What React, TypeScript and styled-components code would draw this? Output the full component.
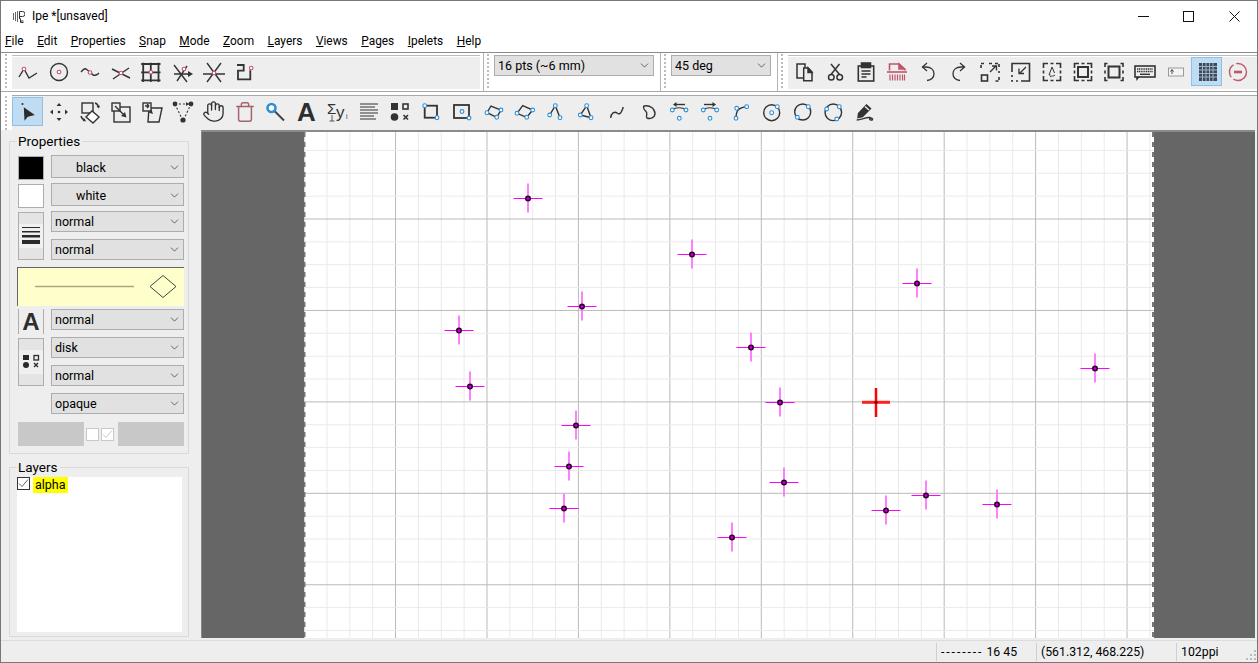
import React from 'react';
import styled, { createGlobalStyle } from 'styled-components';
import { ChevronDown, Hand, Trash } from 'lucide-react';

const GlobalStyle = createGlobalStyle`
  html, body {
    margin: 0;
    padding: 0;
    overflow: hidden;
    background: #fff;
  }
`;

const Window = styled.div`
  position: relative;
  width: 1258px;
  height: 663px;
  display: flex;
  flex-direction: column;
  background: #fff;
  color: #000;
  font-family: Roboto, "Noto Sans CJK KR", sans-serif;
  font-size: 12px;
  outline: 1px solid #777;
  outline-offset: -1px;
`;

const TitleBar = styled.div`
  height: 32px;
  display: flex;
  align-items: center;
  padding-left: 13px;
  flex-shrink: 0;
`;

const TitleText = styled.span`
  margin-left: 7px;
  flex: 1;
`;

const WinButton = styled.div`
  width: 45.5px;
  height: 32px;
  display: flex;
  align-items: center;
  justify-content: center;
`;

const WinButtons = styled.div`
  display: flex;
  padding-right: 1px;
`;

const MenuBar = styled.div`
  height: 18px;
  display: flex;
  align-items: center;
  padding-left: 5px;
  gap: 13.5px;
  font-size: 11.9px;
  flex-shrink: 0;
`;

const MenuItem = styled.span`
  white-space: nowrap;
`;

const TopRow = styled.div`
  height: 40px;
  box-sizing: border-box;
  display: flex;
  border-top: 1px solid #8c8c8c;
  border-bottom: 1px solid #a8a8a8;
  flex-shrink: 0;
  margin-top: 2px;
  margin-bottom: -2px;
`;

const Section = styled.div<{ $width: number; $last?: boolean }>`
  width: ${p => p.$width}px;
  ${p => (p.$last ? 'flex: 1;' : 'border-right: 1px solid #b4b4b4;')}
  box-sizing: border-box;
  display: flex;
  flex-shrink: 0;
`;

const Handle = styled.div<{ $width: number }>`
  width: ${p => p.$width}px;
  flex-shrink: 0;
  &::before {
    content: '';
    display: block;
    margin: 1px 0 1px ${p => (p.$width > 10 ? 5 : 3)}px;
    width: 2px;
    height: 34px;
    background: repeating-linear-gradient(to bottom, #bbb 0 2px, transparent 2px 4px);
  }
`;

const Panel = styled.div<{ $width?: number }>`
  ${p => (p.$width ? `width: ${p.$width}px;` : 'flex: 1;')}
  box-sizing: border-box;
  margin-top: 2px;
  border-top: 1px solid #bdbdbd;
  padding-top: 1px;
  padding-bottom: 2px;
  background: #eee;
  background-clip: content-box;
  display: flex;
  align-items: flex-start;
`;

const ComboHolder = styled.div`
  padding-top: 2px;
`;

const SecondRow = styled.div`
  height: 38px;
  box-sizing: border-box;
  display: flex;
  flex-shrink: 0;
  padding-top: 3px;
  margin-top: 2px;
  margin-bottom: -2px;
`;

const SecondPanel = styled.div`
  flex: 1;
  border-top: 1px solid #a8a8a8;
  background: #eee;
  background-clip: padding-box;
  display: flex;
  align-items: flex-start;
  padding-top: 1px;
`;

const ToolButton = styled.div<{ $on?: boolean }>`
  width: 31px;
  height: 29px;
  box-sizing: border-box;
  flex-shrink: 0;
  display: flex;
  align-items: center;
  justify-content: center;
  border: 1px solid ${p => (p.$on ? '#8cc0e8' : 'transparent')};
  background: ${p => (p.$on ? '#c0dcf3' : 'transparent')};
`;

const BigA = styled.span<{ $size: number }>`
  font-family: "Liberation Sans", sans-serif;
  font-weight: 700;
  font-size: ${p => p.$size}px;
  line-height: 1;
  color: #2e2e2e;
`;

const Main = styled.div`
  height: 510px;
  display: flex;
  flex-shrink: 0;
  margin-top: 2px;
  background: #eee;
`;

const SidePanel = styled.div`
  width: 201px;
  box-sizing: border-box;
  flex-shrink: 0;
  padding: 11px 0 0 9px;
  background: #eee;
`;

const GroupBox = styled.div<{ $gap?: number }>`
  position: relative;
  width: 180px;
  box-sizing: border-box;
  margin-top: ${p => p.$gap ?? 0}px;
  border: 1px solid #d9d9d9;
`;

const Legend = styled.span`
  position: absolute;
  top: -9px;
  left: 7px;
  padding: 0 2px 0 1px;
  background: #eee;
  font-size: 13.5px;
  line-height: 16px;
`;

const PropsGrid = styled.div`
  display: grid;
  grid-template-columns: 26px 133px;
  grid-template-rows: repeat(4, 28px) 42px repeat(4, 28px) 25px;
  column-gap: 7px;
  padding: 13px 0 7px 8px;
`;

const Swatch = styled.div<{ $color: string }>`
  width: 26px;
  height: 24px;
  margin-top: 1px;
  box-sizing: border-box;
  border: 1px solid #adadad;
  background: ${p => p.$color};
  box-shadow: inset 0 0 0 1px ${p => (p.$color === '#000' ? '#000' : '#fff')};
`;

const IconTile = styled.div`
  grid-row: span 2;
  width: 26px;
  height: 48px;
  margin-top: 1px;
  box-sizing: border-box;
  border: 1px solid #adadad;
  background: linear-gradient(to bottom, #e4e4e4 0 11px, #f0f0f0 11px 35px, #e4e4e4 35px);
  display: flex;
  align-items: center;
  justify-content: center;
`;

const ATile = styled.div`
  width: 26px;
  height: 25px;
  box-sizing: border-box;
  border-left: 1px solid #adadad;
  border-right: 1px solid #adadad;
  display: flex;
  align-items: center;
  justify-content: center;
`;

const Combo = styled.div<{ $width: number; $tall?: boolean; $center?: boolean }>`
  width: ${p => p.$width}px;
  height: ${p => (p.$tall ? 23 : 21)}px;
  box-sizing: border-box;
  display: flex;
  align-items: center;
  justify-content: space-between;
  padding: ${p => (p.$tall ? '1px' : '0')} 2px 0 ${p => (p.$center ? 24 : 3)}px;
  border: 1px solid #adadad;
  background: #e1e1e1;
  font-size: 12.5px;
  white-space: nowrap;
`;

const Preview = styled.div`
  grid-column: span 2;
  margin-left: -1px;
  width: 167px;
  height: 39px;
  box-sizing: border-box;
  border-top: 1px solid #646464;
  border-left: 1px solid #646464;
  background: #ffffcc;
`;

const BottomRow = styled.div`
  grid-column: span 2;
  margin-top: 1px;
  display: flex;
  align-items: center;
`;

const GrayBlock = styled.div`
  width: 66px;
  height: 24px;
  background: #c8c8c8;
`;

const MiniCheck = styled.div<{ $ticked?: boolean }>`
  width: 13px;
  height: 13px;
  box-sizing: border-box;
  border: 1px solid #c8c8c8;
  background: #fff;
  margin-left: 2px;
  display: flex;
  ${p => (p.$ticked ? 'margin-right: 4px;' : '')}
`;

const LayersBody = styled.div`
  padding: 9px 6px 4px 7px;
`;

const LayerList = styled.div`
  height: 155px;
  background: #fff;
  display: flex;
  align-items: flex-start;
`;

const LayerCheck = styled.div`
  width: 13px;
  height: 13px;
  box-sizing: border-box;
  border: 1px solid #333;
  background: #fff;
  display: flex;
`;

const LayerName = styled.span`
  margin-left: 3px;
  padding: 0 2px;
  height: 16px;
  line-height: 15px;
  background: #ffff00;
  font-size: 12.5px;
`;

const Canvas = styled.div`
  flex: 1;
  margin-bottom: 2px;
  margin-right: 3px;
  box-sizing: border-box;
  border-left: 1px solid #888;
  border-top: 2px solid #8a8a8a;
  background: #666;
  padding-left: 102px;
  display: flex;
`;

const PageSheet = styled.svg`
  display: block;
  background: #fff;
`;

const StatusBar = styled.div`
  height: 23px;
  box-sizing: border-box;
  border-top: 1px solid #dcdcdc;
  background: #eee;
  display: flex;
  flex-shrink: 0;
  padding: 2px 0 2px 936px;
  font-size: 12.3px;
`;

const StatusCell = styled.div<{ $width?: number }>`
  ${p => (p.$width ? `width: ${p.$width}px;` : 'flex: 1;')}
  box-sizing: border-box;
  border-left: 1px solid #cfcfcf;
  padding-left: 4px;
  line-height: 19px;
  white-space: nowrap;
  position: relative;
`;

const SnapDashes = styled.span`
  letter-spacing: 1.9px;
`;

const Grip = styled.svg`
  position: absolute;
  right: 1px;
  bottom: 0;
`;

// icons are drawn on a 24x24 box, stroke colours taken from the ipe toolbar
const DARK = '#333';
const BLUE = '#2f8fd6';
const ROSE = '#c0566a';

const Ico: React.FC<{ children: React.ReactNode; stroke?: string; sw?: number }> = ({ children, stroke = DARK, sw = 1.4 }) => (
  <svg width={24} height={24} viewBox="0 0 24 24" fill="none" stroke={stroke} strokeWidth={sw}>
    {children}
  </svg>
);

const Cp: React.FC<{ x: number; y: number }> = ({ x, y }) => (
  <circle cx={x} cy={y} r={1.9} fill="#fff" stroke={BLUE} strokeWidth={1.1} />
);

const Sn: React.FC<{ x: number; y: number }> = ({ x, y }) => (
  <circle cx={x} cy={y} r={1.8} fill="#fff" stroke={ROSE} strokeWidth={1.1} />
);

const Dot: React.FC<{ x: number; y: number; r?: number }> = ({ x, y, r = 2 }) => (
  <circle cx={x} cy={y} r={r} fill={DARK} stroke="none" />
);

const snapIcons: React.ReactNode[] = [
  <Ico><path d="M3 17L8 9l5 9 8-5" /><Sn x={8} y={9} /></Ico>,
  <Ico><circle cx={12} cy={12} r={8.5} /><Sn x={12} y={12} /></Ico>,
  <Ico><path d="M3 12c2-2 3-4 5-3l4 3c3 3 3 4 6 3 1-.3 2-1 3-2" /><Sn x={12} y={12.5} /></Ico>,
  <Ico><path d="M3 9l18 9M4 19L20 8" /><Sn x={12} y={13} /></Ico>,
  <Ico sw={1.8}>
    <path d="M3.2 2.700V22M10.800 2.700V22M18.500 2.700V22M1.200 4h19.300M1.200 12.300h19.300M1.200 20.300h19.300" />
    <Sn x={10.800} y={12.300} />
  </Ico>,
  <Ico>
    <path d="M3 5l13 17M16 6L6 21M3 14h15" />
    <path d="M17 11l5 3-5 3z" fill={DARK} stroke="none" />
    <Sn x={13} y={9} />
  </Ico>,
  <Ico><path d="M5 3l14 19M19 3L5 22M1 14h22" /><Sn x={12} y={13} /></Ico>,
  <Ico sw={1.8}>
    <path d="M4 5h6.700v5.700H5v8.600h12.300v-9" />
    <Sn x={18.200} y={8} />
  </Ico>,
];

const toolIcons: React.ReactNode[] = [
  <svg width={24} height={24} viewBox="0 0 24 24">
    <circle cx={6.500} cy={4} r={1.100} fill={DARK} />
    <path d="M7.800 7.300l11 7.700-7 1.700-3.300 4z" fill="#2b2b2b" />
  </svg>,
  <Ico>
    <circle cx={12} cy={12} r={1.300} fill={DARK} stroke="none" />
    <path d="M12 3l-2.500 3h5zM12 21l-2.500-3h5zM3 12l3-2.500v5zM21 12l-3-2.500v5z" fill={DARK} stroke="none" />
  </Ico>,
  <Ico>
    <rect x={4} y={3} width={11} height={10} />
    <path d="M8 17l6-6 7 6-6 6z" fill="#fff" />
    <path d="M17 3c2 .5 3 2 3.500 4M3 16c.5 2 2 3.500 4 4" />
    <path d="M21 8.500l-2.500-2 3.500-1zM8 21.500l-3.500-.5 2-2.500z" fill={DARK} stroke="none" />
  </Ico>,
  <Ico>
    <rect x={5} y={7} width={16} height={15} />
    <rect x={3} y={3} width={8} height={8} fill="#eee" />
    <path d="M6 6l10 10" />
    <path d="M17.500 17.500l-5.500-1.500 4-4z" fill={DARK} stroke="none" />
  </Ico>,
  <Ico>
    <path d="M9 8h13l-3 14H8z" fill="#eee" />
    <rect x={3} y={3} width={8} height={8} fill="#eee" />
    <path d="M5 6h4M9 6l-2-2M9 6l-2 2" />
    <path d="M13 14l-4.500-1.500 3-3z" fill={DARK} stroke="none" />
  </Ico>,
  <Ico sw={1.100}>
    <path d="M4 4l8 17 8-17M4 4h14" strokeDasharray="2 2" />
    <Dot x={4} y={4} r={2.400} />
    <Dot x={20} y={4} r={2.400} />
    <Dot x={12} y={20} r={2.600} />
    <path d="M15 2l3 2-3 2z" fill={DARK} stroke="none" />
  </Ico>,
  <Hand size={23} color={DARK} strokeWidth={1.400} />,
  <Trash size={22} color="#a5646c" strokeWidth={1.600} />,
  <Ico sw={2}>
    <circle cx={7.500} cy={8} r={4} stroke={BLUE} strokeWidth={2.600} fill="#fff" />
    <path d="M11 11.500l9 9" stroke="#444" />
  </Ico>,
  <BigA $size={26}>A</BigA>,
  <svg width={24} height={24} viewBox="0 0 24 24" fill={DARK} fontFamily='"Liberation Sans", sans-serif'>
    <text x={1} y={14} fontSize={15}>Σ</text>
    <text x={10} y={18} fontSize={17}>y</text>
    <text x={20} y={19} fontSize={7}>i</text>
    <path d="M6 15v6M3.500 21h5" stroke={DARK} strokeWidth={0.800} fill="none" />
  </svg>,
  <Ico sw={1.200}>
    <path d="M3 4h18M3 7h15M3 10h18M3 13h18M3 16h14M3 19h16" />
  </Ico>,
  <Ico>
    <rect x={3} y={3} width={7} height={7} fill={DARK} stroke="none" />
    <rect x={15} y={4} width={5} height={5} strokeWidth={1.600} />
    <circle cx={6.500} cy={17} r={3.800} fill={DARK} stroke="none" />
    <path d="M15.500 15l4.500 4.500M20 15l-4.500 4.500" strokeWidth={1.600} />
  </Ico>,
  <Ico sw={1.800}><rect x={5.700} y={5.700} width={12.300} height={12} /><Cp x={5.700} y={5.700} /><Cp x={18} y={17.700} /></Ico>,
  <Ico sw={1.800}><rect x={4} y={5} width={15} height={13} /><Cp x={12} y={11.500} /><Cp x={19} y={18} /></Ico>,
  <Ico><path d="M6 12.700L10 6l10 4-4.300 7.300z" /><Cp x={6} y={12.700} /><Cp x={20} y={10} /><Cp x={15.700} y={17.300} /></Ico>,
  <Ico><path d="M5 13.300L10.700 5.700 20.700 10l-6 7.300z" /><Cp x={5} y={13.300} /><Cp x={20.700} y={10} /><Cp x={14.700} y={17.300} /></Ico>,
  <Ico><path d="M6.700 15l5.600-9.300L17 17.700" /><Cp x={6.700} y={15} /><Cp x={12.300} y={5.700} /><Cp x={17} y={17.700} /></Ico>,
  <Ico><path d="M6.300 15l6.400-9.300L17 17.700z" /><Cp x={6.300} y={15} /><Cp x={12.700} y={5.700} /><Cp x={17} y={17.700} /></Ico>,
  <Ico><path d="M5.700 18c.3-5 4-7 6.300-5s4 1 6.300-6" /></Ico>,
  <Ico><path d="M8 6c6-1.500 11 3 11 7.500 0 4-5 6-8 4.500-2-1.500 1.500-4-1-6.500C8.500 10 6.500 8 8 6z" /></Ico>,
  <Ico sw={1.200}>
    <path d="M5.300 10c3-3 10-3 13.700 0" />
    <path d="M8 4.500h10" strokeWidth={1.400} />
    <path d="M6 4.500l3.500-2.500v5z" fill={DARK} stroke="none" />
    <Cp x={5.300} y={10} /><Cp x={19} y={10} /><Cp x={12.300} y={18.300} />
  </Ico>,
  <Ico sw={1.200}>
    <path d="M5.300 10c3-3 10-3 13.400 0" />
    <path d="M6 4.500h10" strokeWidth={1.400} />
    <path d="M18 4.500l-3.500-2.500v5z" fill={DARK} stroke="none" />
    <Cp x={5.300} y={10} /><Cp x={18.700} y={10} /><Cp x={12} y={18.300} />
  </Ico>,
  <Ico><path d="M7 18.300c0-7 2-11 10.700-11.600" /><Cp x={7} y={18.300} /><Cp x={7.700} y={8.300} /><Cp x={17.700} y={6.700} /></Ico>,
  <Ico><circle cx={11.700} cy={12.700} r={8} /><Cp x={11.700} y={12.700} /><Cp x={17.300} y={6.700} /></Ico>,
  <Ico><circle cx={11.700} cy={12} r={8} /><Cp x={17.300} y={6.700} /><Cp x={6.300} y={17.300} /></Ico>,
  <Ico><circle cx={11.300} cy={12.300} r={8.300} /><Cp x={4.700} y={9} /><Cp x={17.300} y={6.700} /><Cp x={14.700} y={19} /></Ico>,
  <Ico>
    <path d="M5.500 13.500L13.500 5l4 3.500-8 8-4.500 1z" fill={DARK} />
    <path d="M12 6.500l4 3.500" stroke="#eee" />
    <path d="M3.700 20c5 0 9-3 13-2.500 3 .5 4 2.500 1.500 2.500-1.500 0-2-1-1-2" />
  </Ico>,
];

const fileIcons: React.ReactNode[] = [
  <Ico sw={1.500}>
    <rect x={5} y={4} width={8} height={14} />
    <path d="M11.700 8h4.500l3.800 4v8.700h-8.300z" fill="#eee" />
    <path d="M16 8v4.500h4z" fill={DARK} />
  </Ico>,
  <Ico sw={1.500}>
    <path d="M8 4l8.500 10.500M16.500 4L8 14.500" />
    <circle cx={8.300} cy={17.300} r={2.800} />
    <circle cx={16.700} cy={17.300} r={2.800} />
  </Ico>,
  <Ico sw={1.600}>
    <rect x={4.300} y={6} width={15.400} height={15} />
    <rect x={7.500} y={3} width={9} height={4.500} fill={DARK} />
    <path d="M7.500 11h9M7.500 14h9M7.500 17h5" />
  </Ico>,
  <Ico stroke={ROSE} sw={1.600}>
    <path d="M4.500 10.500V4H14l5.500 5v1.500" />
    <path d="M14 4v5h5.500z" fill={ROSE} />
    <path d="M2 12h20" />
    <path d="M5 14.500v6M7.500 14.500v6M10 14.500v6M12.500 14.500v6M15 14.500v6M17.500 14.500v6M19.500 14.500v6" strokeWidth={1.200} />
  </Ico>,
  <Ico sw={1.300}>
    <path d="M11 3L6.500 7 11 11" />
    <path d="M6.500 7H10c5 0 8 3 8 7 0 3.500-3 6.500-7 6.500" />
  </Ico>,
  <Ico sw={1.300}>
    <path d="M13 3l4.500 4L13 11" />
    <path d="M17.500 7H14c-5 0-8 3-8 7 0 3.500 3 6.500 7 6.500" />
  </Ico>,
  <Ico sw={1.600}>
    <path d="M3 8V3.500h4.500M11 3.500h3M17 3.500h4V8M21 11v2M21 17v4h-4" strokeDasharray="3 1.500" />
    <rect x={3.500} y={15} width={6} height={6} />
    <path d="M12 12l6-6M14 6h4.500v4.500" strokeWidth={1.300} />
  </Ico>,
  <Ico sw={1.600}>
    <path d="M3 12V3.500h17.500V21H12" />
    <path d="M3 15v2M3 20v1h1.500M7 21h2" strokeDasharray="2 1.500" />
    <path d="M17 7l-6 6M10 8.500V13.500h5" strokeWidth={1.300} />
  </Ico>,
  <Ico sw={1.600}>
    <path d="M3.500 8V3.500H8M16 3.500h4.500V8M3.500 16v4.500H8M16 20.500h4.500V16M10.500 3.500h3M10.500 20.500h3M3.500 10.500v3M20.500 10.500v3" />
    <path d="M12 7l-3 8h1.500M12 7l2.500 6M10 17c2-2 3 0 5-2" strokeWidth={1} />
  </Ico>,
  <Ico sw={1.600}>
    <path d="M3.500 8V3.500H8M16 3.500h4.500V8M3.500 16v4.500H8M16 20.500h4.500V16M10.500 3.500h3M10.500 20.500h3M3.500 10.500v3M20.500 10.500v3" />
    <rect x={7} y={7} width={10} height={10} strokeWidth={2} />
  </Ico>,
  <Ico sw={1.600}>
    <path d="M3 7V3.500h2.500M18.500 3.500H21V7M3 17v3.500h2.500M18.500 20.500H21V17M3 10.500v3M21 10.500v3" />
    <rect x={6.500} y={6.500} width={11} height={11} strokeWidth={2} />
  </Ico>,
  <Ico sw={1.400}>
    <rect x={2} y={6} width={20} height={11} fill="#eee" strokeWidth={1.600} />
    <path d="M4 9h16M4 11.500h16" strokeDasharray="1.200 .6" />
    <path d="M7 14.300h10" />
    <path d="M3 17l.5 4 3-4z" fill={DARK} stroke="none" />
  </Ico>,
  <Ico stroke="#9a9a9a" sw={1}>
    <rect x={4.500} y={8} width={15} height={8} fill="#f4f4f4" />
    <path d="M8 14v-4M6.500 11.500L8 9.500l1.500 2" stroke="#444" />
  </Ico>,
  <svg width={24} height={24} viewBox="0 0 24 24">
    <rect x={4} y={3} width={18} height={18} fill="#3a4a5a" />
    <path d="M7.500 3v18M11 3v18M14.500 3v18M18 3v18M4 6.500h18M4 10h18M4 13.500h18M4 17h18" stroke="#9fb4c8" strokeWidth={1} />
  </svg>,
  <Ico stroke={ROSE} sw={1.400}>
    <circle cx={12} cy={12} r={8.500} strokeDasharray="18 3 14 3" />
    <path d="M8 12h8" strokeWidth={2.600} />
  </Ico>,
];

const IpeLogo: React.FC = () => (
  <svg width={12} height={15} viewBox="0 0 12 15" fill="none" stroke="#333" strokeWidth={1}>
    <path d="M.5 4v7M2.500 3v9M4.500 2v11" stroke="#666" />
    <path d="M6.500 10V2.500h3a2.500 2.500 0 0 1 0 5h-3" />
    <path d="M7.500 12h3M7.500 9.500v4h3" />
  </svg>
);

const menus: [string, string][] = [
  ['F', 'ile'], ['E', 'dit'], ['P', 'roperties'], ['S', 'nap'], ['M', 'ode'], ['Z', 'oom'],
  ['L', 'ayers'], ['V', 'iews'], ['P', 'ages'], ['I', 'pelets'], ['H', 'elp'],
];

const SelectBox: React.FC<{ label: string; width?: number; tall?: boolean; center?: boolean }> = ({ label, width = 133, tall, center }) => (
  <Combo $width={width} $tall={tall} $center={center}>
    <span>{label}</span>
    <ChevronDown size={13} strokeWidth={1.300} color="#333" />
  </Combo>
);

// page coordinates of the drawing, the sheet starts at 304,132 on screen
const SHEET_X = 304;
const SHEET_Y = 132;
const STEP = 91.44;

const marks: [number, number][] = [
  [528, 198], [692, 254], [917, 283], [582, 306], [459, 330], [751, 347], [1095, 368], [470, 386],
  [780, 402], [576, 425], [569, 466], [784, 482], [926, 495], [564, 508], [886, 510], [997, 504], [732, 537],
];

const minorX = Array.from({ length: 38 }, (_, i) => 0.1 + (i * STEP) / 4);
const minorY = Array.from({ length: 23 }, (_, i) => 219 - STEP + (i * STEP) / 4 - SHEET_Y);

const Page: React.FC = () => (
  <PageSheet width={850} height={506} viewBox="0 0 850 506">
    {minorX.map((x, i) => (
      <line key={`x${i}`} x1={x} x2={x} y1={0} y2={506} stroke={i % 4 ? '#eaeaea' : '#bababa'} />
    ))}
    {minorY.map((y, i) => (
      <line key={`y${i}`} x1={0} x2={850} y1={y} y2={y} stroke={i % 4 ? '#eaeaea' : '#bababa'} />
    ))}
    <line x1={0.5} x2={0.5} y1={0} y2={506} stroke="#777" strokeWidth={2} strokeDasharray="5 5" />
    <line x1={849} x2={849} y1={0} y2={506} stroke="#777" strokeWidth={2} strokeDasharray="5 5" />
    {marks.map(([mx, my]) => {
      const x = mx - SHEET_X;
      const y = my - SHEET_Y;
      return (
        <g key={`${mx}-${my}`}>
          <line x1={x} x2={x} y1={y - 14.5} y2={y + 14.5} stroke="#ff80ff" strokeWidth={2} />
          <line x1={x - 14.5} x2={x + 14.5} y1={y + 0.5} y2={y + 0.5} stroke="#ff00ff" />
          <circle cx={x} cy={y + 0.5} r={3} fill="#300030" />
          <circle cx={x} cy={y + 0.5} r={1.300} fill="#d000d0" />
        </g>
      );
    })}
    <line x1={572} x2={572} y1={256} y2={285} stroke="#ff0000" strokeWidth={2.500} />
    <line x1={558} x2={586} y1={270.300} y2={270.300} stroke="#ff2020" strokeWidth={3} />
    <circle cx={572} cy={270.300} r={1.500} fill="#700000" />
  </PageSheet>
);

const App: React.FC = () => (
  <Window>
    <GlobalStyle />
    <TitleBar>
      <IpeLogo />
      <TitleText>Ipe *[unsaved]</TitleText>
      <WinButtons>
        <WinButton>
          <svg width={11} height={11} viewBox="0 0 11 11" stroke="#111"><path d="M0 5.500h11" /></svg>
        </WinButton>
        <WinButton>
          <svg width={11} height={11} viewBox="0 0 11 11" stroke="#111" fill="none"><rect x={0.500} y={0.500} width={10} height={10} /></svg>
        </WinButton>
        <WinButton>
          <svg width={11} height={11} viewBox="0 0 11 11" stroke="#111"><path d="M.5.500l10 10M10.500.500l-10 10" /></svg>
        </WinButton>
      </WinButtons>
    </TitleBar>
    <MenuBar>
      {menus.map(([key, rest]) => (
        <MenuItem key={key + rest}><u>{key}</u>{rest}</MenuItem>
      ))}
    </MenuBar>
    <TopRow>
      <Section $width={484}>
        <Handle $width={12} />
        <Panel $width={468}>
          {snapIcons.map((icon, i) => <ToolButton key={i}>{icon}</ToolButton>)}
        </Panel>
      </Section>
      <Section $width={177}>
        <Handle $width={10} />
        <ComboHolder>
          <SelectBox label="16 pts (~6 mm)" width={160} />
        </ComboHolder>
      </Section>
      <Section $width={117}>
        <Handle $width={10} />
        <ComboHolder>
          <SelectBox label="45 deg" width={100} />
        </ComboHolder>
      </Section>
      <Section $width={480} $last>
        <Handle $width={10} />
        <Panel>
          {fileIcons.map((icon, i) => <ToolButton key={i} $on={i === 13}>{icon}</ToolButton>)}
        </Panel>
      </Section>
    </TopRow>
    <SecondRow>
      <Handle $width={12} />
      <SecondPanel>
        {toolIcons.map((icon, i) => <ToolButton key={i} $on={i === 0}>{icon}</ToolButton>)}
      </SecondPanel>
    </SecondRow>
    <Main>
      <SidePanel>
        <GroupBox>
          <Legend>Properties</Legend>
          <PropsGrid>
            <Swatch $color="#000" />
            <SelectBox label="black" tall center />
            <Swatch $color="#fff" />
            <SelectBox label="white" tall center />
            <IconTile>
              <svg width={18} height={18} viewBox="0 0 18 18" fill="#2a2a2a">
                <rect x={0} y={0} width={18} height={1} />
                <rect x={0} y={4} width={18} height={1.500} />
                <rect x={0} y={8} width={18} height={2.500} />
                <rect x={0} y={13} width={18} height={4} />
              </svg>
            </IconTile>
            <SelectBox label="normal" />
            <SelectBox label="normal" />
            <Preview>
              <svg width={165} height={37} viewBox="0 0 165 37">
                <line x1={17} x2={116} y1={18.500} y2={18.500} stroke="#a8a880" strokeWidth={1.500} />
                <path d="M132 18.500L145 7.500l13 11-13 11z" fill="none" stroke="#444" />
              </svg>
            </Preview>
            <ATile><BigA $size={24}>A</BigA></ATile>
            <SelectBox label="normal" />
            <IconTile>
              <svg width={18} height={18} viewBox="0 0 18 18">
                <rect x={1} y={2} width={6} height={5} fill="#2a2a2a" />
                <rect x={12} y={2.500} width={4.500} height={4.500} fill="none" stroke="#2a2a2a" strokeWidth={1.300} />
                <circle cx={4} cy={12} r={3} fill="#2a2a2a" />
                <path d="M12 10l4 4M16 10l-4 4" stroke="#2a2a2a" strokeWidth={1.300} />
              </svg>
            </IconTile>
            <SelectBox label="disk" />
            <SelectBox label="normal" />
            <div />
            <SelectBox label="opaque" />
            <BottomRow>
              <GrayBlock />
              <MiniCheck />
              <MiniCheck $ticked>
                <svg width={11} height={11} viewBox="0 0 11 11" fill="none" stroke="#c8c8c8"><path d="M1 5.500l3 3 6-7" /></svg>
              </MiniCheck>
              <GrayBlock />
            </BottomRow>
          </PropsGrid>
        </GroupBox>
        <GroupBox $gap={13}>
          <Legend>Layers</Legend>
          <LayersBody>
            <LayerList>
              <LayerCheck>
                <svg width={11} height={11} viewBox="0 0 11 11" fill="none" stroke="#666"><path d="M1 5.500l3 3 6-7" /></svg>
              </LayerCheck>
              <LayerName>alpha</LayerName>
            </LayerList>
          </LayersBody>
        </GroupBox>
      </SidePanel>
      <Canvas>
        <Page />
      </Canvas>
    </Main>
    <StatusBar>
      <StatusCell $width={100}><SnapDashes>--------</SnapDashes> 16 45</StatusCell>
      <StatusCell $width={140}>(561.312, 468.225)</StatusCell>
      <StatusCell>
        102ppi
        <Grip width={12} height={12} viewBox="0 0 12 12" fill="#bbb">
          <rect x={9} y={1} width={2} height={2} />
          <rect x={5} y={5} width={2} height={2} />
          <rect x={9} y={5} width={2} height={2} />
          <rect x={1} y={9} width={2} height={2} />
          <rect x={5} y={9} width={2} height={2} />
          <rect x={9} y={9} width={2} height={2} />
        </Grip>
      </StatusCell>
    </StatusBar>
  </Window>
);

export default App;
